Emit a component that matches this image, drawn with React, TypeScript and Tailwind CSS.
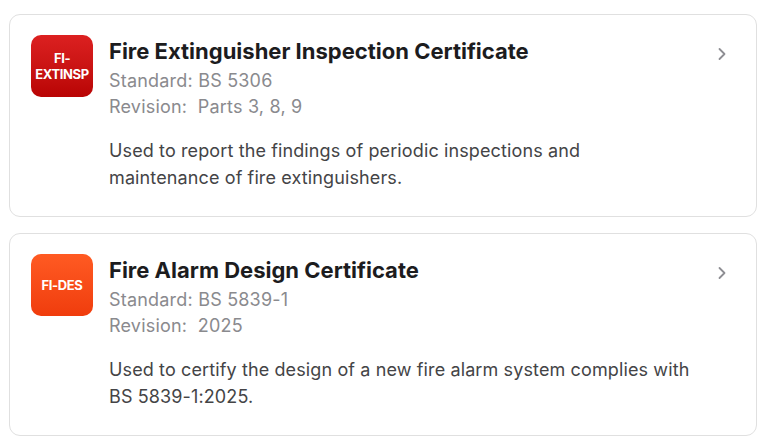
type Cert = {
  code: string[];
  title: string;
  standard: string;
  revision: string;
  description: string;
  badgeClass: string;
};

const certs: Cert[] = [
  {
    code: ["FI-", "EXTINSP"],
    title: "Fire Extinguisher Inspection Certificate",
    standard: "BS 5306",
    revision: "Parts 3, 8, 9",
    description:
      "Used to report the findings of periodic inspections and maintenance of fire extinguishers.",
    badgeClass: "bg-gradient-to-b from-[#dc2020] to-[#b90404]",
  },
  {
    code: ["FI-DES"],
    title: "Fire Alarm Design Certificate",
    standard: "BS 5839-1",
    revision: "2025",
    description:
      "Used to certify the design of a new fire alarm system complies with BS 5839-1:2025.",
    badgeClass: "bg-gradient-to-b from-[#ff5a22] to-[#f03c0c]",
  },
];

function Chevron() {
  return (
    <svg
      width="12"
      height="14"
      viewBox="0 0 12 14"
      fill="none"
      stroke="#8e8e93"
      strokeWidth="1.8"
      strokeLinecap="round"
      strokeLinejoin="round"
      className="mt-[12px] shrink-0"
    >
      <polyline points="3.5,2 8.5,7 3.5,12" />
    </svg>
  );
}

function CertCard({ cert }: { cert: Cert }) {
  return (
    <div className="flex rounded-[11px] border border-[#e0e0e0] bg-white pl-[21px] pr-[28px] pt-[20px] pb-[25px]">
      <div
        className={`flex h-[62px] w-[62px] shrink-0 flex-col items-center justify-center rounded-[10px] text-[13px] font-bold leading-[16px] tracking-[-0.4px] text-white ${cert.badgeClass}`}
      >
        {cert.code.map((line) => (
          <span key={line}>{line}</span>
        ))}
      </div>
      <div className="ml-4 flex-1">
        <h3 className="mb-[1px] text-[22px] font-bold leading-[32px] text-[#1c1c1e]">
          {cert.title}
        </h3>
        <p className="text-[18px] leading-[26px] tracking-[0.2px] text-[#8a8a8e]">
          Standard: {cert.standard}
        </p>
        <p className="whitespace-pre text-[18px] leading-[26px] tracking-[0.2px] text-[#8a8a8e]">
          Revision:  {cert.revision}
        </p>
        <p className="mt-[17px] max-w-[583px] text-[18px] leading-[27px] tracking-[0.12px] text-[#444446]">
          {cert.description}
        </p>
      </div>
      <Chevron />
    </div>
  );
}

export default function App() {
  return (
    <div className="flex min-h-[448px] flex-col gap-4 bg-white pl-[9px] pr-[11px] pt-[14px] font-['Inter',sans-serif]">
      {certs.map((cert) => (
        <CertCard key={cert.title} cert={cert} />
      ))}
    </div>
  );
}
